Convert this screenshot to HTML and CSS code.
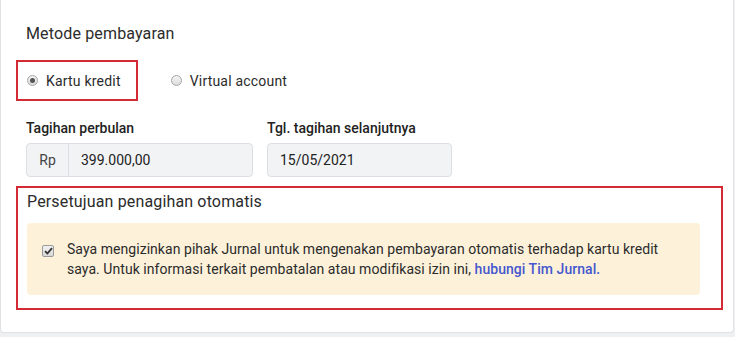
FILE: index.html
```html
<!DOCTYPE html>
<html lang="id">
<head>
    <meta charset="UTF-8">
    <meta name="viewport" content="width=device-width, initial-scale=1.0">
    <title>Metode pembayaran</title>
    <link rel="stylesheet" href="styles.css">
</head>
<body>
    <div class="card">
        <!-- Pilihan metode pembayaran -->
        <h2 class="title">Metode pembayaran</h2>
        <div class="methods">
            <label class="option highlight">
                <span class="radio checked"></span>
                Kartu kredit
            </label>
            <label class="option">
                <span class="radio"></span>
                Virtual account
            </label>
        </div>

        <!-- Detail tagihan -->
        <div class="fields">
            <div class="field field-amount">
                <div class="label">Tagihan perbulan</div>
                <div class="input-group">
                    <span class="addon">Rp</span>
                    <span class="input">399.000,00</span>
                </div>
            </div>
            <div class="field field-date">
                <div class="label">Tgl. tagihan selanjutnya</div>
                <div class="input-group">
                    <span class="input">15/05/2021</span>
                </div>
            </div>
        </div>

        <!-- Persetujuan -->
        <div class="agreement highlight">
            <h2 class="title">Persetujuan penagihan otomatis</h2>
            <div class="notice">
                <span class="checkbox">
                    <svg width="9" height="8" viewBox="0 0 9 8"><path d="M1 4.2 L3.4 6.5 L8 1.2" fill="none" stroke="#333" stroke-width="1.8"/></svg>
                </span>
                <p>Saya mengizinkan pihak Jurnal untuk mengenakan pembayaran otomatis terhadap kartu kredit saya. Untuk informasi terkait pembatalan atau modifikasi izin ini, <a href="#">hubungi Tim Jurnal.</a></p>
            </div>
        </div>
    </div>
</body>
</html>
```

FILE: styles.css
```css
/* Styles généraux */
body {
    margin: 0;
    background-color: #eef0f2;
    font-family: Roboto, "Liberation Sans", Arial, sans-serif;
    color: #333;
}

.card {
    width: 681px;
    padding: 23px 26px 22px 25px;
    background-color: #fff;
    border: 1px solid #e0e2e5;
    border-top: none;
    border-radius: 0 0 4px 4px;
}

.title {
    margin: 0;
    font-size: 16px;
    line-height: 22px;
    font-weight: 400;
    color: #2b2b2b;
    letter-spacing: 0.15px;
}

/* Cadre rouge */
.highlight {
    border: 2px solid #d42a33;
    margin-left: -10px;
}

/* Choix du paiement */
.methods {
    display: flex;
    align-items: center;
    margin-top: 15px;
    height: 41px;
}

.option {
    display: flex;
    align-items: center;
    gap: 8px;
    font-size: 14px;
    line-height: 20px;
    height: 37px;
    color: #2b2b2b;
    letter-spacing: 0.2px;
}

.option.highlight {
    padding: 0 15px 0 9px;
}

.option + .option {
    margin-left: 33px;
}

.radio {
    width: 11px;
    height: 11px;
    border-radius: 50%;
    border: 1px solid #a5a5a5;
    background: linear-gradient(#f4f4f4, #dcdcdc);
    box-sizing: border-box;
    display: flex;
    align-items: center;
    justify-content: center;
}

.radio.checked::after {
    content: "";
    width: 5px;
    height: 5px;
    border-radius: 50%;
    background-color: #555;
}

/* Champs */
.fields {
    display: flex;
    gap: 14px;
    margin-top: 17px;
}

.label {
    font-size: 14px;
    line-height: 20px;
    font-weight: 500;
    color: #222;
    margin-bottom: 5px;
}

.input-group {
    display: flex;
    height: 34px;
    box-sizing: border-box;
    border: 1px solid #dcdfe3;
    border-radius: 4px;
    background-color: #f2f3f5;
    font-size: 14px;
    line-height: 32px;
}

.field-amount {
    width: 227px;
}

.field-date {
    width: 185px;
}

.addon {
    width: 41px;
    text-align: center;
    border-right: 1px solid #dcdfe3;
    color: #444;
}

.input {
    padding-left: 12px;
    color: #222;
}

/* Persetujuan */
.agreement {
    margin-top: 9px;
    margin-right: -16px;
    padding: 3px 21px 13px 9px;
}

.notice {
    display: flex;
    align-items: flex-start;
    margin-top: 10px;
    padding: 16px 16px 16px 15px;
    background-color: #fdf1da;
    border-radius: 4px;
}

.checkbox {
    flex: none;
    width: 12px;
    height: 12px;
    margin-top: 6px;
    margin-right: 13px;
    box-sizing: border-box;
    border: 1px solid #9a9a9a;
    border-radius: 2px;
    background: linear-gradient(#f2f2f2, #d8d8d8);
    display: flex;
    align-items: center;
    justify-content: center;
}

.notice p {
    margin: 0;
    font-size: 14px;
    line-height: 20px;
    color: #2b2b2b;
    letter-spacing: 0.05px;
}

.notice a {
    color: #4557cf;
    text-decoration: none;
    font-weight: 500;
}
```
